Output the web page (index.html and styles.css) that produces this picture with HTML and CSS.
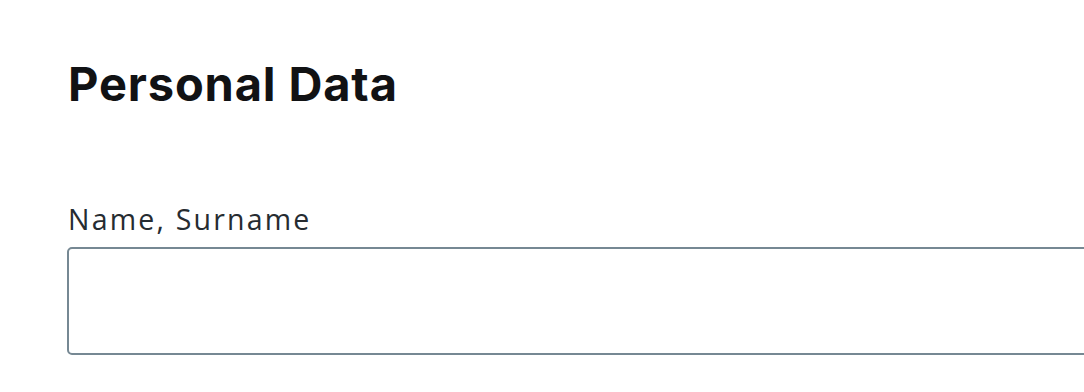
FILE: index.html
```html
<!DOCTYPE html>
<html>
<head>
<meta charset="utf-8">
<link rel="stylesheet" href="styles.css">
</head>
<body>
<main class="page">
  <h1 class="title">Personal Data</h1>
  <div class="field">
    <label class="label" for="name">Name, Surname</label>
    <input class="input" id="name" type="text">
  </div>
</main>
</body>
</html>
```
FILE: styles.css
```css
html, body {
  margin: 0;
  padding: 0;
  background: #ffffff;
  overflow: hidden;
}
.page {
  padding: 56px 0 0 68px;
  font-family: Inter, "Noto Sans", sans-serif;
  width: 1016px;
  overflow: hidden;
}
.title {
  margin: 0;
  font-size: 47px;
  line-height: 56px;
  font-weight: 700;
  color: #111214;
  letter-spacing: 0.85px;
}
.field {
  margin-top: 90px;
  display: flex;
  flex-direction: column;
}
.label {
  font-family: "Open Sans", Inter, sans-serif;
  font-size: 28.5px;
  line-height: 34px;
  color: #262c31;
  margin-bottom: 11px;
  letter-spacing: 2.2px;
}
.input {
  box-sizing: border-box;
  margin-left: -1px;
  width: 1100px;
  height: 108px;
  border: 2px solid #768893;
  border-radius: 5px;
  background: #fff;
  outline: none;
}
```
